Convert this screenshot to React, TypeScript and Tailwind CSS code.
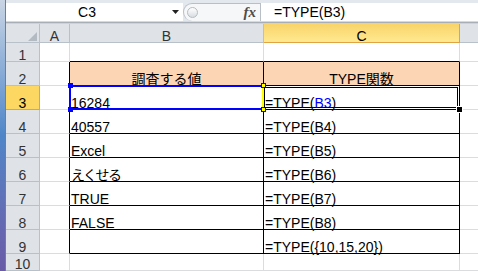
import React from "react";

const cellFont = "font-['Liberation_Sans','Noto_Sans_CJK_JP',sans-serif]";

type Row = {
  n: number;
  h: string;
  b?: React.ReactNode;
  c?: React.ReactNode;
  head?: boolean;
  table?: boolean;
};

const Blue = ({ children }: { children: React.ReactNode }) => (
  <span className="text-[#0000ff]">{children}</span>
);

const rows: Row[] = [
  { n: 1, h: "h-[19px]" },
  { n: 2, h: "h-[24px]", b: "調査する値", c: "TYPE関数", head: true, table: true },
  { n: 3, h: "h-[24px]", b: "16284", c: <>=TYPE(<Blue>B3</Blue>)</>, table: true },
  { n: 4, h: "h-[24px]", b: "40557", c: "=TYPE(B4)", table: true },
  { n: 5, h: "h-[24px]", b: "Excel", c: "=TYPE(B5)", table: true },
  { n: 6, h: "h-[24px]", b: <span className="tracking-[-1.5px]">えくせる</span>, c: "=TYPE(B6)", table: true },
  { n: 7, h: "h-[24px]", b: "TRUE", c: "=TYPE(B7)", table: true },
  { n: 8, h: "h-[24px]", b: "FALSE", c: "=TYPE(B8)", table: true },
  { n: 9, h: "h-[24px]", b: "", c: "=TYPE({10,15,20})", table: true },
  { n: 10, h: "h-[17px]" },
];

export default function App() {
  return (
    <div className={`flex w-[478px] h-[271px] overflow-hidden bg-white text-[14px] text-black ${cellFont}`}>
      {/* window edge */}
      <div className="w-[6px] shrink-0 bg-gradient-to-b from-[#c9d5e4] via-[#4f86c8] to-[#6a5aa6] border-r border-[#6f8096]" />

      <div className="flex-1 flex flex-col min-w-0">
        {/* formula bar */}
        <div className="h-[21px] flex pt-[3px] bg-[#e3e8ee]">
          <div className="w-[177px] bg-white flex items-center">
            <div className="w-[162px] text-center leading-[14px]">C3</div>
            <svg width="7" height="4" viewBox="0 0 7 4" className="ml-[4px]">
              <path d="M0 0h7L3.5 4z" fill="#222" />
            </svg>
          </div>
          <div className="w-[77px] flex items-center bg-[#f6f7f8] rounded-l-[9px] border border-r-0 border-b-0 border-[#b9bfc6]">
            <div className="ml-[3px] w-[11px] h-[11px] rounded-full border border-[#b5bbc2] bg-gradient-to-b from-[#ffffff] to-[#d9dde2]" />
            <div className="ml-auto mr-[4px] font-['Liberation_Serif',serif] italic font-bold text-[15px] leading-[14px] text-[#4d4d4d]">
              fx
            </div>
          </div>
          <div className="flex-1 bg-white border-l border-[#b9bfc6] flex items-center pl-[13px] leading-[14px]">
            =TYPE(B3)
          </div>
        </div>
        <div className="h-[1px] bg-[#d6dade]" />
        <div className="h-[2px] bg-[#a7aeb6]" />
        <div className="h-[1px] bg-[#cdd2d8]" />

        {/* column headers */}
        <div className="h-[19px] flex bg-[#dfe3e8] text-[#333] leading-[12px]">
          <div className="w-[34px] shrink-0 border-r border-b border-[#b8c0ca] flex items-end justify-end pr-[2px] pb-[1px]">
            <svg width="9" height="9" viewBox="0 0 9 9">
              <path d="M9 0V9H0z" fill="#b4bac2" />
            </svg>
          </div>
          <div className="w-[30px] shrink-0 border-r border-b border-[#b8c0ca] flex items-end justify-center">A</div>
          <div className="w-[194px] shrink-0 border-r border-b border-[#b8c0ca] flex items-end justify-center">B</div>
          <div className="w-[196px] shrink-0 border-r border-b border-[#e2a442] bg-gradient-to-b from-[#f8d46a] to-[#ffe98f] flex items-end justify-center text-black">
            C
          </div>
          <div className="flex-1 border-b border-[#b8c0ca]" />
        </div>

        {/* sheet rows */}
        <div className="relative flex-1">
          {rows.map((r) => {
            const sel = r.n === 3;
            const aBorder = r.table ? "border-r-black" : "border-r-[#dadcdd]";
            const tableB = r.table
              ? "border-black"
              : r.n === 1
              ? "border-r-[#dadcdd] border-b-black"
              : "border-[#dadcdd]";
            return (
              <div key={r.n} className={`${r.h} flex leading-[12px]`}>
                <div
                  className={`w-[34px] shrink-0 border-r border-b flex items-end justify-center ${
                    sel
                      ? "bg-[#fcd762] border-[#e2a442] text-black"
                      : "bg-[#dfe3e8] border-[#b8c0ca] text-[#333]"
                  }`}
                >
                  {r.n}
                </div>
                <div className={`w-[30px] shrink-0 border-r border-b border-b-[#dadcdd] ${aBorder}`} />
                <div
                  className={`w-[194px] shrink-0 border-r border-b ${tableB} flex items-end whitespace-nowrap ${
                    r.head ? "bg-[#fcd5b4] justify-center" : "pl-[1px]"
                  }`}
                >
                  {r.b}
                </div>
                <div
                  className={`w-[196px] shrink-0 border-r border-b ${tableB} flex items-end whitespace-nowrap ${
                    r.head ? "bg-[#fcd5b4] justify-center" : "pl-[1px]"
                  }`}
                >
                  {r.c}
                </div>
                <div className="flex-1 border-b border-[#dadcdd]" />
              </div>
            );
          })}

          {/* B3 reference range */}
          <div className="absolute left-[63px] top-[42px] w-[195px] h-[25px] border-2 border-[#0000ff] border-r-[#ffff00]" />
          <div className="absolute left-[62px] top-[40px] w-[5px] h-[5px] bg-[#0000ff]" />
          <div className="absolute left-[62px] top-[64px] w-[5px] h-[5px] bg-[#0000ff]" />
          <div className="absolute left-[255px] top-[40px] w-[5px] h-[5px] bg-[#ffff00] border border-[#0000ff]" />
          <div className="absolute left-[255px] top-[64px] w-[5px] h-[5px] bg-[#ffff00] border border-[#0000ff]" />

          {/* active cell C3 */}
          <div className="absolute left-[258px] top-[44px] w-[194px] h-[21px] border border-black" />
          <div className="absolute left-[450px] top-[63px] w-[7px] h-[7px] bg-black border border-white" />
        </div>
      </div>
    </div>
  );
}
